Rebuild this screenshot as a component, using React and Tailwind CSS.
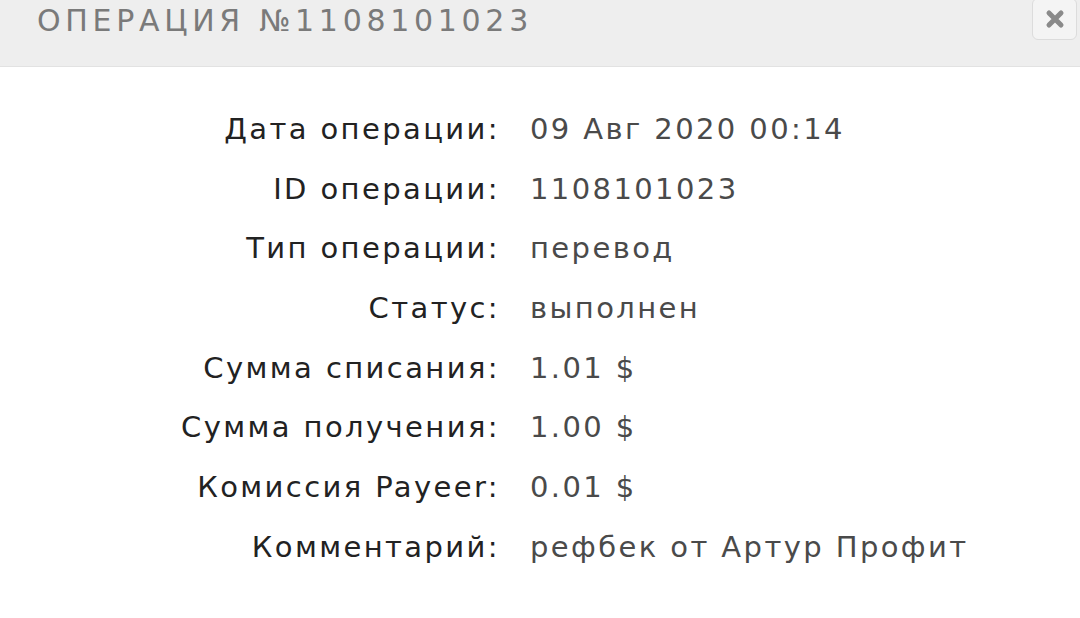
import React from 'react';

const rows = [
  ['Дата операции:', '09 Авг 2020 00:14'],
  ['ID операции:', '1108101023'],
  ['Тип операции:', 'перевод'],
  ['Статус:', 'выполнен'],
  ['Сумма списания:', '1.01 $'],
  ['Сумма получения:', '1.00 $'],
  ['Комиссия Payeer:', '0.01 $'],
  ['Комментарий:', 'рефбек от Артур Профит'],
];

const App = () => {
  return (
    <div className="w-[1080px] h-[618px] bg-white overflow-hidden" style={{ fontFamily: '"DejaVu Sans", "Liberation Sans", sans-serif' }}>
      {/* header */}
      <div className="h-[67px] bg-[#eeeeee] border-b border-[#e2e2e2] flex items-start justify-between pl-[37px] pr-[3px]">
        <h1 className="mt-[1px] text-[30px] leading-[40px] tracking-[4.7px] text-[#7a7a7a] font-normal">ОПЕРАЦИЯ №1108101023</h1>
        <button className="w-[45px] h-[42px] -mt-[2px] rounded-[6px] border border-[#dcdcdc] bg-[#f4f4f4] flex items-center justify-center">
          <svg width="22" height="22" viewBox="0 0 22 22">
            <path d="M5 5 L17 17 M17 5 L5 17" stroke="#8a8a8a" strokeWidth="5" strokeLinecap="round" />
          </svg>
        </button>
      </div>

      {/* details */}
      <div className="pt-[33px] grid grid-cols-[500px_1fr] gap-x-[30px] text-[29px] tracking-[2.4px]">
        {rows.map(([label, value]) => (
          <React.Fragment key={label}>
            <div className="h-[59.7px] leading-[59.7px] text-right text-[#222222]">{label}</div>
            <div className="h-[59.7px] leading-[59.7px] text-[#4a4a4a]">{value}</div>
          </React.Fragment>
        ))}
      </div>
    </div>
  );
};

export default App;
